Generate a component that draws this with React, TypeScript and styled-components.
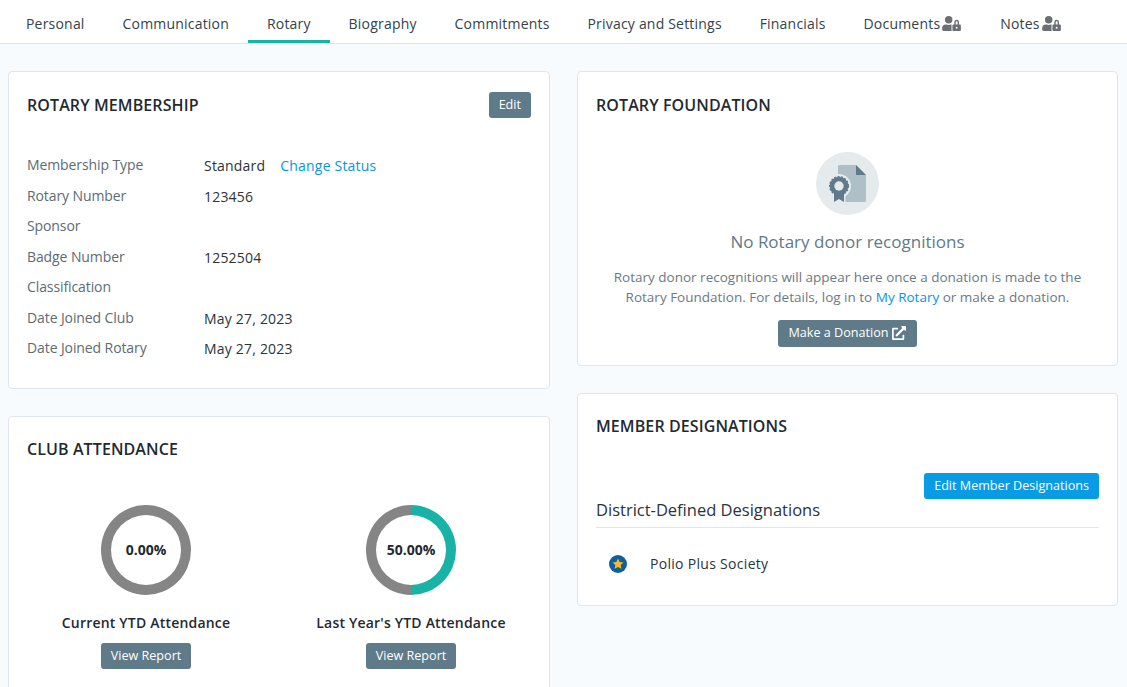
import React from 'react';
import styled, { createGlobalStyle } from 'styled-components';
import { FaUserLock, FaExternalLinkAlt } from 'react-icons/fa';

const GlobalStyle = createGlobalStyle`
  html, body {
    margin: 0;
    height: 100%;
    overflow: hidden;
    background: #f7fbfe;
    font-family: 'Open Sans', 'Liberation Sans', sans-serif;
    color: #1f2a30;
  }
`;

const TabBar = styled.nav`
  display: flex;
  height: 43px;
  padding-left: 7px;
  background: #fff;
  border-bottom: 1px solid #dfe5ea;
  box-sizing: content-box;
`;

const Tab = styled.div<{ $active?: boolean }>`
  display: flex;
  align-items: center;
  gap: 2px;
  height: 43px;
  box-sizing: border-box;
  padding: 7px 19px 0;
  margin-right: -0.1px;
  font-size: 14px;
  letter-spacing: 0.2px;
  color: #33424b;
  border-bottom: 3px solid ${(p) => (p.$active ? '#18b3a6' : 'transparent')};
`;

const LockIcon = styled(FaUserLock)`
  width: 19px;
  height: 15px;
  margin-right: 1px;
  color: #6b6f73;
`;

const Columns = styled.main`
  display: grid;
  grid-template-columns: 542px 541px;
  column-gap: 27px;
  padding: 27px 0 0 8px;
`;

const Column = styled.div`
  display: flex;
  flex-direction: column;
  gap: 27px;
`;

const Card = styled.section<{ $height: number }>`
  background: #fff;
  border: 1px solid #dfe5ea;
  border-radius: 4px;
  box-sizing: border-box;
  height: ${(p) => p.$height}px;
  padding: 20px 18px;
`;

const CardHeader = styled.div`
  display: flex;
  justify-content: space-between;
  align-items: flex-start;
  height: 26px;
`;

const CardTitle = styled.h2`
  margin: 0;
  font-size: 16px;
  line-height: 26px;
  font-weight: 600;
  letter-spacing: 0.1px;
  color: #1f2a30;
`;

const RaisedTitle = styled(CardTitle)`
  margin-top: -1px;
`;

const Button = styled.button<{ $primary?: boolean }>`
  display: inline-flex;
  align-items: center;
  justify-content: center;
  gap: 4px;
  height: 26px;
  padding: 0 10px 2px;
  border: 0;
  border-radius: 3px;
  background: ${(p) => (p.$primary ? '#0a9be5' : '#5f7a88')};
  color: #fff;
  font-family: inherit;
  font-size: 12.6px;
  white-space: nowrap;
`;

const DonationButton = styled(Button)`
  height: 27px;
  width: 139px;
`;

const Details = styled.dl`
  display: grid;
  grid-template-columns: 177px 1fr;
  margin: 32px 0 0;
  font-size: 14px;
`;

const Label = styled.dt`
  height: 30.5px;
  line-height: 30px;
  letter-spacing: -0.1px;
  color: #5d6b73;
`;

const Value = styled.dd`
  margin: 0;
  height: 30.5px;
  line-height: 32px;
  letter-spacing: 0.2px;
  color: #2a343a;
`;

const Link = styled.a`
  color: #0a94dc;
`;

const StatusLink = styled(Link)`
  margin-left: 15px;
`;

const Gauges = styled.div`
  display: grid;
  grid-template-columns: 265px 265px;
  margin: 42px 0 0 -13.5px;
`;

const Gauge = styled.div`
  display: flex;
  flex-direction: column;
  align-items: center;
`;

const Ring = styled.div<{ $percent: number }>`
  position: relative;
  display: flex;
  align-items: center;
  justify-content: center;
  width: 90px;
  height: 90px;
  border-radius: 50%;
  background: conic-gradient(#18b3a6 0 ${(p) => p.$percent}%, #858585 ${(p) => p.$percent}% 100%);
`;

const RingCenter = styled.div`
  display: flex;
  align-items: center;
  justify-content: center;
  width: 70px;
  height: 70px;
  padding-bottom: 1px;
  box-sizing: border-box;
  border-radius: 50%;
  background: #fff;
  font-size: 14px;
  font-weight: 700;
  color: #1f2a30;
`;

const GaugeLabel = styled.div`
  margin: 16px 0 8px;
  height: 24px;
  line-height: 24px;
  font-size: 14px;
  font-weight: 600;
  letter-spacing: 0.2px;
  color: #1f2a30;
`;

const Empty = styled.div`
  display: flex;
  flex-direction: column;
  align-items: center;
  margin-top: 34px;
  text-align: center;
`;

const EmptyBadge = styled.div`
  display: flex;
  width: 63px;
  height: 63px;
  border-radius: 50%;
  background: #e5eaed;
`;

const EmptyTitle = styled.div`
  margin-top: 14px;
  font-size: 17px;
  line-height: 26px;
  color: #5f7a88;
`;

const EmptyText = styled.p`
  margin: 12px 0 13px;
  font-size: 13.5px;
  line-height: 20px;
  color: #6b7a83;
`;

const DesignationsTop = styled.div`
  display: flex;
  justify-content: flex-end;
  margin-top: 33px;
`;

const SectionTitle = styled.h3`
  margin: -2px 0 0;
  padding-bottom: 4px;
  font-size: 16.5px;
  line-height: 26px;
  font-weight: 500;
  color: #2a343a;
  border-bottom: 1px solid #dfe5ea;
`;

const DesignationRow = styled.div`
  display: flex;
  align-items: center;
  gap: 23px;
  padding: 21px 0 0 13px;
  font-size: 14px;
  line-height: 30px;
  letter-spacing: 0.3px;
  color: #2a343a;
`;

const DonationIcon = () => (
  <svg width="63" height="63" viewBox="0 0 63 63">
    <path d="M23.500 13H40l10 10v25.500a1.500 1.500 0 0 1-1.500 1.500H23.500a1.500 1.500 0 0 1-1.500-1.500v-34a1.500 1.500 0 0 1 1.500-1.500z" fill="#aebfc7" />
    <path d="M40 13l10 10H40z" fill="#5f7a88" />
    <circle cx="23" cy="34" r="12" fill="#e5eaed" />
    <path d="M16.500 38v13h13V38z" fill="#e5eaed" />
    <path d="M18 38v12l5-3 5 3V38z" fill="#5f7a88" />
    <circle cx="23" cy="34" r="9.300" fill="#5f7a88" stroke="#5f7a88" strokeWidth="1.400" strokeDasharray="2 1.500" />
    <circle cx="23" cy="34" r="4.700" fill="#e5eaed" />
  </svg>
);

const StarBadge = () => (
  <svg width="18" height="18" viewBox="0 0 18 18">
    <circle cx="9" cy="9" r="9" fill="#0f5f9e" />
    <path d="M9 3.600l1.700 3.400 3.700.5-2.700 2.600.7 3.700L9 12l-3.400 1.800.7-3.700-2.700-2.600 3.700-.5z" fill="#f7b928" />
  </svg>
);

const tabs = ['Personal', 'Communication', 'Rotary', 'Biography', 'Commitments', 'Privacy and Settings', 'Financials'];

const membership: [string, React.ReactNode][] = [
  ['Membership Type', <>Standard<StatusLink>Change Status</StatusLink></>],
  ['Rotary Number', '123456'],
  ['Sponsor', ''],
  ['Badge Number', '1252504'],
  ['Classification', ''],
  ['Date Joined Club', 'May 27, 2023'],
  ['Date Joined Rotary', 'May 27, 2023'],
];

const attendance = [
  { label: 'Current YTD Attendance', percent: 0 },
  { label: "Last Year's YTD Attendance", percent: 50 },
];

const App: React.FC = () => (
  <>
    <GlobalStyle />
    <TabBar>
      {tabs.map((t) => (
        <Tab key={t} $active={t === 'Rotary'}>{t}</Tab>
      ))}
      <Tab>Documents <LockIcon /></Tab>
      <Tab>Notes <LockIcon /></Tab>
    </TabBar>
    <Columns>
      <Column>
        <Card $height={318}>
          <CardHeader>
            <CardTitle>ROTARY MEMBERSHIP</CardTitle>
            <Button>Edit</Button>
          </CardHeader>
          <Details>
            {membership.map(([label, value]) => (
              <React.Fragment key={label}>
                <Label>{label}</Label>
                <Value>{value}</Value>
              </React.Fragment>
            ))}
          </Details>
        </Card>
        <Card $height={300}>
          <CardHeader>
            <RaisedTitle>CLUB ATTENDANCE</RaisedTitle>
          </CardHeader>
          <Gauges>
            {attendance.map((a) => (
              <Gauge key={a.label}>
                <Ring $percent={a.percent}>
                  <RingCenter>{a.percent.toFixed(2)}%</RingCenter>
                </Ring>
                <GaugeLabel>{a.label}</GaugeLabel>
                <Button>View Report</Button>
              </Gauge>
            ))}
          </Gauges>
        </Card>
      </Column>
      <Column>
        <Card $height={295}>
          <CardHeader>
            <CardTitle>ROTARY FOUNDATION</CardTitle>
          </CardHeader>
          <Empty>
            <EmptyBadge><DonationIcon /></EmptyBadge>
            <EmptyTitle>No Rotary donor recognitions</EmptyTitle>
            <EmptyText>
              Rotary donor recognitions will appear here once a donation is made to the<br />
              Rotary Foundation. For details, log in to <Link>My Rotary</Link> or make a donation.
            </EmptyText>
            <DonationButton>Make a Donation <FaExternalLinkAlt size={14} /></DonationButton>
          </Empty>
        </Card>
        <Card $height={213}>
          <CardHeader>
            <RaisedTitle>MEMBER DESIGNATIONS</RaisedTitle>
          </CardHeader>
          <DesignationsTop>
            <Button $primary>Edit Member Designations</Button>
          </DesignationsTop>
          <SectionTitle>District-Defined Designations</SectionTitle>
          <DesignationRow>
            <StarBadge />
            Polio Plus Society
          </DesignationRow>
        </Card>
      </Column>
    </Columns>
  </>
);

export default App;
